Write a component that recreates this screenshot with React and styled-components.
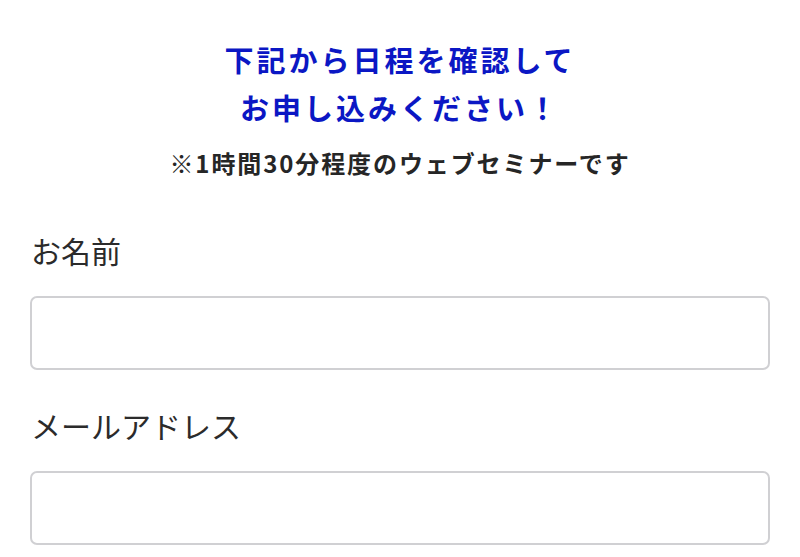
import React from "react";
import styled, { createGlobalStyle } from "styled-components";

const Global = createGlobalStyle`
  html, body { margin: 0; padding: 0; background: #ffffff; }
  body { font-family: "Noto Sans CJK JP", "Noto Sans", sans-serif; }
  * { box-sizing: border-box; }
`;

const Page = styled.div`
  padding: 35px 30px 0;
  display: flex;
  flex-direction: column;
`;

const Header = styled.header`
  display: flex;
  flex-direction: column;
  align-items: center;
  text-align: center;
`;

const Title = styled.h1`
  margin: 0;
  font-size: 29px;
  line-height: 48px;
  font-weight: 700;
  letter-spacing: 3px;
  color: #0b17c4;
`;

const Note = styled.p`
  margin: 14px 0 0;
  font-size: 24px;
  line-height: 36px;
  font-weight: 700;
  letter-spacing: 1.9px;
  color: #262626;
`;

const Form = styled.form`
  display: flex;
  flex-direction: column;
  margin-top: 49px;
`;

const Field = styled.div`
  display: flex;
  flex-direction: column;
  gap: 26px;
  & + & {
    margin-top: 35px;
  }
`;

const Label = styled.label`
  font-size: 30px;
  line-height: 40px;
  color: #2b2b2b;
  padding-left: 1px;
`;

const Input = styled.input`
  width: 100%;
  height: 74px;
  border: 2px solid #d0d0d3;
  border-radius: 7px;
  background: #fff;
  font-size: 24px;
  padding: 0 16px;
  outline: none;
  font-family: inherit;
`;

export default function App() {
  return (
    <>
      <Global />
      <Page>
        <Header>
          <Title>
            下記から日程を確認して
            <br />
            お申し込みください！
          </Title>
          <Note>※1時間30分程度のウェブセミナーです</Note>
        </Header>
        <Form onSubmit={(e) => e.preventDefault()}>
          <Field>
            <Label htmlFor="name">お名前</Label>
            <Input id="name" type="text" />
          </Field>
          <Field>
            <Label htmlFor="email">メールアドレス</Label>
            <Input id="email" type="email" />
          </Field>
        </Form>
      </Page>
    </>
  );
}
